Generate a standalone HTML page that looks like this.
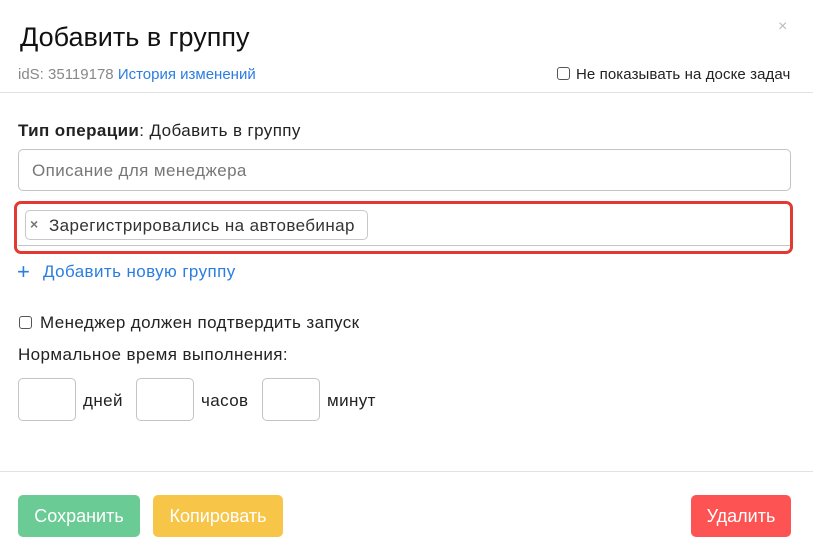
<!DOCTYPE html>
<html><head><meta charset="utf-8"><style>
body{margin:0;width:813px;height:557px;background:#fff;font-family:"Liberation Sans","Noto Sans CJK SC",sans-serif;color:#222;position:relative;overflow:hidden}
.a{position:absolute;white-space:nowrap}
.t{font-size:17px;letter-spacing:0.4px}
.box{position:absolute;border:1px solid #c4c4c8;border-radius:5px;box-sizing:border-box;background:#fff}
.cb{position:absolute;width:12px;height:12px;border:1px solid #555;border-radius:3px;box-sizing:border-box}
.btn{position:absolute;top:495px;height:42px;border-radius:5px;color:#fff;font-size:18px;line-height:42px;text-align:center}
</style></head><body>
<div class="a" style="left:20px;top:22px;font-size:27px;color:#111">Добавить в группу</div>
<div class="a" style="left:778px;top:18px;font-size:16px;color:#bbb">×</div>
<div class="a" style="left:18px;top:66px;font-size:15px;color:#888">idS: 35119178 <span style="color:#2b7de0">История изменений</span></div>
<div class="cb" style="left:557px;top:67px;width:13px;height:13px"></div>
<div class="a" style="left:576px;top:66px;font-size:15px;color:#222;letter-spacing:0.1px">Не показывать на доске задач</div>
<div class="a" style="left:0;top:92px;width:813px;height:1px;background:#e2e2e2"></div>
<div class="a t" style="left:18px;top:121px"><b>Тип операции</b>: Добавить в группу</div>
<div class="box" style="left:18px;top:149px;width:773px;height:42px"></div>
<div class="a t" style="left:32px;top:161px;color:#777">Описание для менеджера</div>
<div class="a" style="left:14px;top:201px;width:779px;height:53px;border:3px solid #e23a33;border-radius:7px;box-sizing:border-box"></div>
<div class="a" style="left:18px;top:245px;width:772px;height:1px;background:#c4c4c8"></div>
<div class="box" style="left:25px;top:210px;width:343px;height:30px;border-color:#c8c8c8"></div>
<div class="a" style="left:30px;top:216px;font-size:14px;color:#777;font-weight:bold">×</div>
<div class="a t" style="left:49px;top:216px;color:#333">Зарегистрировались на автовебинар</div>
<div class="a" style="left:17px;top:259px;font-size:22px;color:#2b7de0">+</div>
<div class="a t" style="left:43px;top:262px;color:#2b7de0">Добавить новую группу</div>
<div class="cb" style="left:19px;top:316px;width:13px;height:13px"></div>
<div class="a t" style="left:40px;top:313px">Менеджер должен подтвердить запуск</div>
<div class="a t" style="left:18px;top:345px">Нормальное время выполнения:</div>
<div class="box" style="left:18px;top:378px;width:58px;height:43px"></div>
<div class="a t" style="left:83px;top:391px">дней</div>
<div class="box" style="left:136px;top:378px;width:58px;height:43px"></div>
<div class="a t" style="left:201px;top:391px">часов</div>
<div class="box" style="left:262px;top:378px;width:58px;height:43px"></div>
<div class="a t" style="left:327px;top:391px">минут</div>
<div class="a" style="left:0;top:471px;width:813px;height:1px;background:#e2e2e2"></div>
<div class="btn" style="left:18px;width:122px;background:#6acb95">Сохранить</div>
<div class="btn" style="left:153px;width:130px;background:#f7c548">Копировать</div>
<div class="btn" style="left:691px;width:100px;background:#fe5353">Удалить</div>
</body></html>
